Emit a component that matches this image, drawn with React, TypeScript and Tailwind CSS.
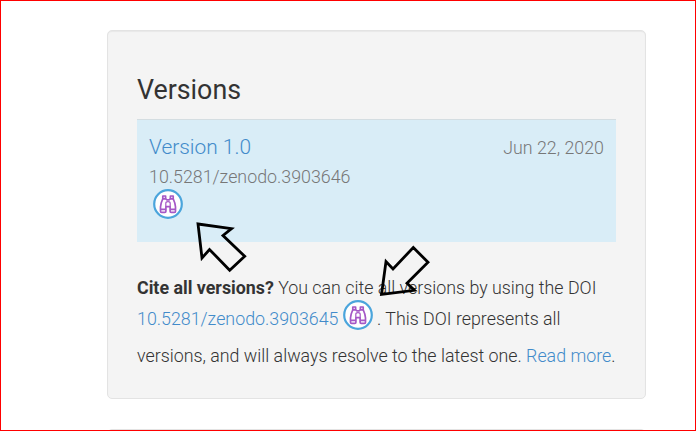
function Binoculars() {
  return (
    <svg className="h-[30px] w-[30px] shrink-0" viewBox="0 0 30 30" fill="none">
      <circle cx="15" cy="15" r="13.8" fill="#fff" stroke="#4ba5dc" strokeWidth="2.2" />
      <g stroke="#a558c6" strokeWidth="1.7" strokeLinejoin="round">
        <path d="M9.8 9.8V7h2.8v2.5l1.1 1.3h2.6l1.1-1.3V7h2.8v2.8l1.6 4.2.7 3.8v4.4c0 .7-.4 1.1-1.1 1.1h-3.2c-.7 0-1.1-.4-1.1-1.1V17.6h-4.2v4.6c0 .7-.4 1.1-1.1 1.1H8.6c-.7 0-1.1-.4-1.1-1.1v-4.4L8.2 14z" />
        <path d="M9.4 9.8h3.4M17.2 9.8h3.4M7.5 20.3h5.4M17.1 20.3h5.4" />
        <path d="M12.8 17.5v-3.2c0-1 .8-1.7 2.2-1.7s2.2.7 2.2 1.7v3.2" strokeWidth="1.2" />
      </g>
    </svg>
  );
}

export default function App() {
  return (
    <div className="relative flex h-[431px] w-[696px] flex-col overflow-hidden border border-[#f00] bg-white pl-[106px] pt-[29px] font-['Roboto',sans-serif] text-[17.82px] font-light text-[#333]">
      <section className="h-[369px] w-[539px] shrink-0 rounded-[5px] border border-[#e3e3e3] bg-[#f4f4f4] px-[29px] pt-[40px] shadow-[inset_0_1px_1px_rgba(0,0,0,0.05)]">
        <h2 className="h-[48px] text-[26.8px] font-normal leading-[38px]">Versions</h2>
        <div className="h-[123px] border-t border-[#d4dde1] bg-[#d9edf7] px-3 pt-3 text-[#777]">
          <div className="flex h-[30px] items-start justify-between">
            <a className="text-[20.9px] leading-[30px] text-[#428bca]">Version 1.0</a>
            <span className="leading-[32px]">Jun 22, 2020</span>
          </div>
          <div className="h-[27px] leading-[30px]">10.5281/zenodo.3903646</div>
          <div className="pl-1"><Binoculars /></div>
        </div>
        <div className="whitespace-nowrap pt-[31px]">
          <p className="h-[27px] leading-[30px]"><strong className="font-bold">Cite all versions?</strong> You can cite all versions by using the DOI</p>
          <p className="flex h-[30px] leading-[38px]">
            <a className="mr-[4.6px] text-[#428bca]">10.5281/zenodo.3903645</a><Binoculars /><span className="ml-[4px]">. This DOI represents all</span>
          </p>
          <p className="pt-[11px] leading-[30px]">versions, and will always resolve to the latest one. <a className="text-[#428bca]">Read more</a>.</p>
        </div>
      </section>
      <section className="mt-[30px] h-10 w-[539px] shrink-0 rounded-[5px] border border-[#e3e3e3] bg-[#f4f4f4]" />
      <svg className="absolute -left-px -top-px h-[431px] w-[696px]" viewBox="0 0 696 431" fill="none" stroke="#000" strokeWidth="2.8">
        <path d="M198 224L231.5 228.7L223 235.5L244.7 256.3L229.7 270.2L209.5 249.5L202 258Z" />
        <path d="M381.5 294.5L386 261.5L393 269L413.3 247.5L428 262.3L407 283.3L414.5 290.3Z" />
      </svg>
    </div>
  );
}
